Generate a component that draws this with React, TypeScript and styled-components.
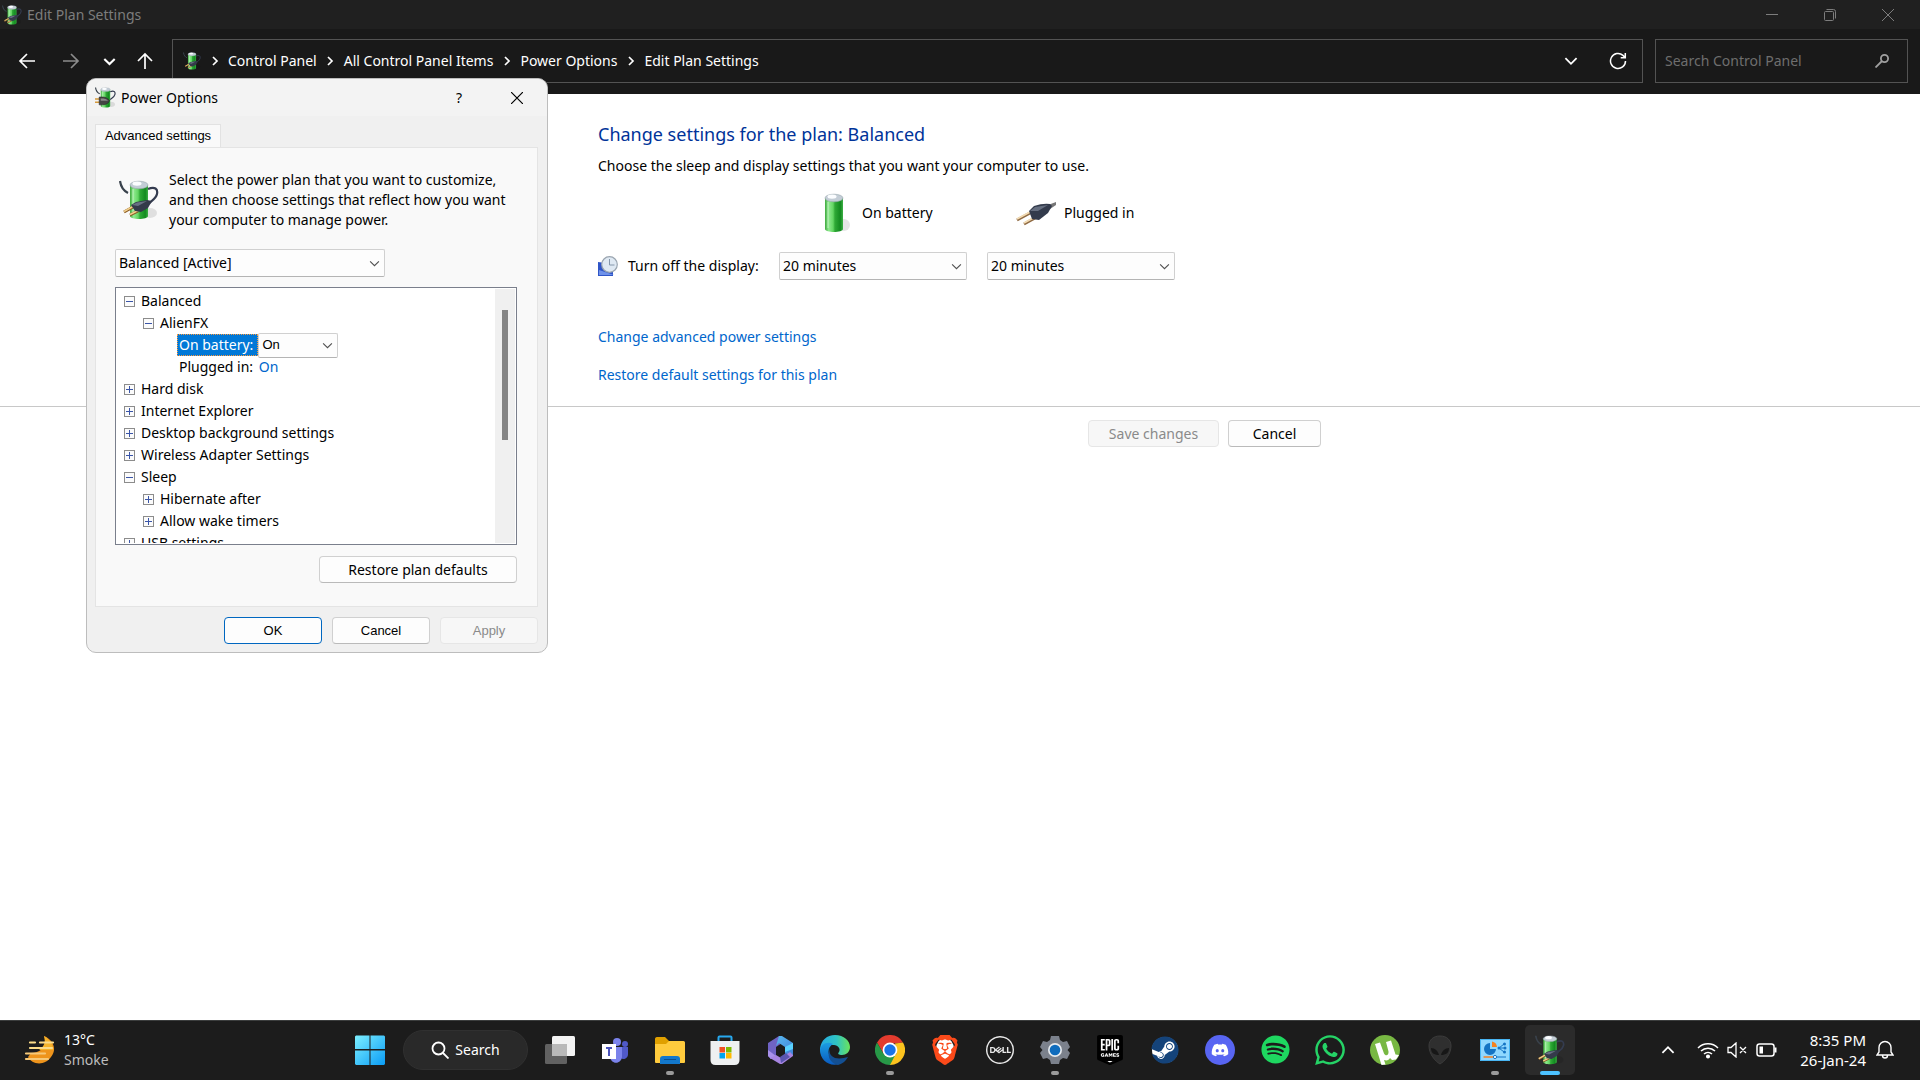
import React, { useState } from "react";
import styled, { createGlobalStyle } from "styled-components";
import { SiDell, SiBrave, SiEpicgames } from "react-icons/si";
import { FaSteam, FaSpotify, FaWhatsapp, FaDiscord } from "react-icons/fa";

const UI = `"Noto Sans", "Open Sans", sans-serif`;
const SHELL = `"Liberation Sans", Arial, sans-serif`;

const Global = createGlobalStyle`
  * { box-sizing: border-box; }
  body { margin: 0; background: #fff; color: #000; font: 14px/20px ${UI}; overflow: hidden; }
  button, input, select { font: inherit; color: inherit; }
  svg { display: block; flex: none; }
`;

/* ---------- window ---------- */

const Screen = styled.div`
  position: relative;
  display: flex;
  flex-direction: column;
  min-height: 100vh;
`;

const TitleBar = styled.header`
  display: flex;
  align-items: center;
  justify-content: space-between;
  height: 29px;
  background: #202020;
  color: #7d7d7d;
`;

const WindowTitle = styled.h1`
  display: flex;
  align-items: center;
  gap: 5px;
  margin: 0;
  padding-left: 2px;
  font-size: 14px;
  font-weight: 400;
`;

const WindowButtons = styled.div`
  display: flex;
  gap: 10px;
  padding-right: 8px;
`;

const BareButton = styled.button<{ $w?: number; $h?: number }>`
  display: flex;
  align-items: center;
  justify-content: center;
  width: ${(p) => p.$w ?? 48}px;
  height: ${(p) => p.$h ?? 29}px;
  padding: 0;
  border: 0;
  background: transparent;
  color: inherit;
`;

const NavBar = styled.nav`
  display: flex;
  align-items: center;
  height: 65px;
  padding: 0 12px 1px 5px;
  background: #191919;
  color: #fff;
`;

const NavButtons = styled.div`
  display: flex;
  width: 167px;
`;

const AddressBar = styled.div`
  display: flex;
  flex: 1;
  align-items: center;
  height: 44px;
  margin-right: 12px;
  padding-left: 10px;
  border: 1px solid #535353;
`;

const Crumbs = styled.ol`
  display: flex;
  flex: 1;
  align-items: center;
  margin: 0;
  padding: 0;
  list-style: none;
`;

const Crumb = styled.li`
  display: flex;
  align-items: center;
`;

const CrumbLink = styled.a`
  color: #fff;
  text-decoration: none;
`;

const SearchBox = styled.label`
  display: flex;
  align-items: center;
  width: 253px;
  height: 44px;
  padding: 0 18px 0 9px;
  border: 1px solid #535353;
  color: #a0a0a0;
`;

const SearchInput = styled.input`
  flex: 1;
  min-width: 0;
  padding: 0;
  border: 0;
  outline: 0;
  background: transparent;
  &::placeholder { color: #6e6e6e; opacity: 1; }
`;

/* ---------- plan page ---------- */

const Page = styled.main`
  flex: 1;
  background: #fff;
`;

const PlanSection = styled.section`
  padding: 26px 24px 21px 598px;
  border-bottom: 1px solid #c8c8c8;
`;

const PlanHeading = styled.h2`
  margin: 0 0 8px;
  font-size: 18px;
  line-height: 28px;
  font-weight: 400;
  color: #003399;
`;

const Lead = styled.p`
  margin: 0 0 17px;
`;

const SettingsGrid = styled.div`
  display: grid;
  grid-template-columns: 161px 188px 188px;
  column-gap: 20px;
  row-gap: 19px;
  margin-bottom: 47px;
`;

const ColumnHead = styled.div<{ $inset: number }>`
  display: flex;
  align-items: center;
  gap: 8px;
  padding-left: ${(p) => p.$inset}px;
`;

const RowLabel = styled.div`
  display: flex;
  align-items: center;
  gap: 10px;
  white-space: nowrap;
`;

const PlanLinks = styled.div`
  display: flex;
  flex-direction: column;
  align-items: flex-start;
  gap: 18px;
`;

const TextLink = styled.a`
  color: #0066cc;
  text-decoration: none;
`;

const PageActions = styled.div`
  display: flex;
  justify-content: flex-end;
  gap: 9px;
  max-width: 1321px;
  padding-top: 13px;
`;

const PushButton = styled.button<{ $w: number; $shell?: boolean; $primary?: boolean }>`
  width: ${(p) => p.$w}px;
  height: 27px;
  padding: 0;
  border: 1px solid ${(p) => (p.$primary ? "#0067c0" : "#d0d0d0")};
  border-bottom-color: ${(p) => (p.$primary ? "#0067c0" : "#bababa")};
  border-radius: 4px;
  background: #fdfdfd;
  font-family: ${(p) => (p.$shell ? SHELL : UI)};
  font-size: ${(p) => (p.$shell ? 13 : 14)}px;
  line-height: 20px;
  &:disabled { border-color: #e6e6e6; background: #f7f7f7; color: #8a8a8a; }
`;

const SelectFrame = styled.span<{ $w: number; $small?: boolean }>`
  display: grid;
  grid-template-columns: 1fr 20px;
  align-items: center;
  width: ${(p) => p.$w}px;
  height: ${(p) => (p.$small ? 25 : 28)}px;
  border: 1px solid #d0d0d0;
  border-bottom-color: #b4b4b4;
  border-radius: 2px;
  background: #fdfdfd;
  font-family: ${(p) => (p.$small ? SHELL : UI)};
  font-size: ${(p) => (p.$small ? 13 : 14)}px;
  svg { grid-area: 1 / 2; justify-self: center; pointer-events: none; color: #505050; }
`;

const NativeSelect = styled.select`
  grid-area: 1 / 1 / 2 / 3;
  width: 100%;
  height: 100%;
  padding: 0 20px 0 3px;
  border: 0;
  outline: 0;
  appearance: none;
  background: transparent;
`;

/* ---------- dialog ---------- */

const Dialog = styled.section`
  position: absolute;
  left: 86px;
  top: 78px;
  width: 462px;
  border: 1px solid #bdbdbd;
  border-radius: 10px;
  overflow: hidden;
  background: #f0f0f0;
`;

const DialogTitle = styled.header`
  display: flex;
  align-items: center;
  height: 37px;
  padding-left: 8px;
  background: #f3f3f3;
`;

const DialogName = styled.h2`
  flex: 1;
  margin: 0 0 0 5px;
  font-size: 14px;
  font-weight: 400;
`;

const DialogBody = styled.div`
  padding: 8px 9px 0 8px;
`;

const Tab = styled.button`
  display: block;
  width: 126px;
  height: 24px;
  margin-bottom: -1px;
  padding: 0 0 2px;
  border: 1px solid #e2e2e2;
  border-bottom: 0;
  background: #f9f9f9;
  font-family: ${SHELL};
  font-size: 13px;
`;

const TabPanel = styled.div`
  display: flex;
  flex-direction: column;
  align-items: flex-start;
  padding: 22px 20px 23px 19px;
  border: 1px solid #e4e4e4;
  background: #f9f9f9;
`;

const Intro = styled.div`
  display: flex;
  align-items: center;
  gap: 10px;
  margin-bottom: 19px;
  padding-left: 4px;
`;

const IntroText = styled.p`
  margin: 0;
  white-space: pre;
`;

const TreeFrame = styled.div`
  display: flex;
  align-self: stretch;
  height: 258px;
  margin: 10px 0 11px;
  padding: 1px;
  border: 1px solid #7a7f8c;
  background: #fff;
`;

const Tree = styled.ul`
  flex: 1;
  margin: 0;
  padding: 1px 0 0;
  list-style: none;
  overflow: hidden;
`;

const TreeRow = styled.li<{ $indent: number }>`
  display: flex;
  align-items: center;
  height: 22px;
  padding-left: ${(p) => p.$indent}px;
`;

const Toggle = styled.button`
  display: flex;
  width: 11px;
  height: 11px;
  margin-right: 4px;
  padding: 0;
  border: 1px solid #8c8c8c;
  background: #fbfbfb;
  color: #3a55a8;
`;

const NodeText = styled.span<{ $selected?: boolean }>`
  height: 22px;
  padding: 0 ${(p) => (p.$selected ? 4 : 1)}px 0 1px;
  border: 1px ${(p) => (p.$selected ? "dotted #ff9a3c" : "solid transparent")};
  background: ${(p) => (p.$selected ? "#0078d7" : "transparent")};
  color: ${(p) => (p.$selected ? "#fff" : "#000")};
  white-space: nowrap;
`;

const ScrollTrack = styled.div`
  display: flex;
  justify-content: center;
  width: 20px;
  padding-top: 21px;
  background: #f0f0f0;
`;

const ScrollThumb = styled.div`
  width: 6px;
  height: 130px;
  background: #858585;
`;

const RestoreRow = styled.div`
  align-self: flex-end;
`;

const DialogActions = styled.footer`
  display: flex;
  justify-content: flex-end;
  gap: 10px;
  padding: 10px 0 8px;
`;

/* ---------- taskbar ---------- */

const Taskbar = styled.footer`
  display: grid;
  grid-template-columns: 345px 1fr auto;
  align-items: center;
  height: 60px;
  padding-bottom: 2px;
  border-top: 1px solid #3b3d3d;
  background: #1c1c1c;
  color: #fff;
`;

const Weather = styled.div`
  display: flex;
  align-items: center;
  gap: 8px;
  padding-left: 24px;
`;

const Muted = styled.div`
  color: #bdbdbd;
`;

const Apps = styled.div`
  display: flex;
  align-items: center;
  gap: 5px;
`;

const AppButton = styled.button<{ $active?: boolean }>`
  display: grid;
  grid-template-rows: 46px 4px;
  justify-items: center;
  align-items: center;
  width: 50px;
  height: 50px;
  padding: 0;
  border: 0;
  border-radius: 5px;
  background: ${(p) => (p.$active ? "#2b2b2b" : "transparent")};
  color: #fff;
  > svg { margin-top: 4px; }
`;

const Running = styled.span<{ $active?: boolean }>`
  width: ${(p) => (p.$active ? 20 : 8)}px;
  height: 4px;
  border-radius: 2px;
  background: ${(p) => (p.$active ? "#4cc2ff" : "#9a9a9a")};
`;

const SearchPill = styled.button`
  display: flex;
  align-items: center;
  justify-content: center;
  gap: 6px;
  width: 125px;
  height: 40px;
  margin: 0 2px 0 3px;
  padding: 0;
  border: 1px solid #303030;
  border-radius: 20px;
  background: #292929;
`;

const Tray = styled.div`
  display: flex;
  align-items: center;
  padding-right: 25px;
`;

const TrayGroup = styled.div`
  display: flex;
  align-items: center;
  gap: 8px;
  margin: 0 23px 0 22px;
`;

const Clock = styled.div`
  margin-right: 9px;
  font-size: 15px;
  text-align: right;
`;

/* ---------- drawings ---------- */

const Chevron = ({ size = 10, turn = 0, width = 1.4 }: { size?: number; turn?: number; width?: number }) => (
  <svg width={size} height={size} viewBox="0 0 10 10" fill="none" stroke="currentColor" strokeWidth={width}>
    <path d="M1 3l4 4 4-4" transform={`rotate(${turn} 5 5)`} />
  </svg>
);

const Arrow = ({ turn = 0, dim }: { turn?: number; dim?: boolean }) => (
  <svg width="18" height="18" viewBox="0 0 18 18" fill="none" stroke={dim ? "#8c8c8c" : "#fff"} strokeWidth="1.7">
    <path d="M17 9H2M9 2L2 9l7 7" transform={`rotate(${turn} 9 9)`} />
  </svg>
);

const Greens = ({ id }: { id: string }) => (
  <defs>
    <linearGradient id={id}>
      <stop offset="0" stopColor="#3fa83f" />
      <stop offset=".2" stopColor="#8eea8e" />
      <stop offset=".45" stopColor="#63d563" />
      <stop offset=".55" stopColor="#2fa936" />
      <stop offset=".85" stopColor="#138a20" />
      <stop offset="1" stopColor="#3db045" />
    </linearGradient>
  </defs>
);

const Cell = ({ id }: { id: string }) => (
  <>
    <path d="M11 5v31c0 4 18 4 18 0V5z" fill={`url(#${id})`} />
    <ellipse cx="20" cy="5" rx="9" ry="3.800" fill="#c3cdd6" stroke="#9aa7ae" strokeWidth=".6" />
    <ellipse cx="18" cy="3.600" rx="4.500" ry="2.200" fill="#fbfdff" />
    <path d="M14 9v26" stroke="#d3fad3" strokeOpacity=".5" strokeWidth="1.500" />
  </>
);

const PowerIcon = ({ id, size = 40, left }: { id: string; size?: number; left?: boolean }) => (
  <svg width={size} height={size} viewBox="0 0 40 40">
    <Greens id={id} />
    <ellipse cx="31" cy="33" rx="7" ry="5" fill="#000" opacity=".1" />
    <path d="M1 1c1 7 4 10 8 12" fill="none" stroke="#39424c" strokeWidth="2.200" />
    <Cell id={id} />
    <path d="M29 9c7-3 10 0 9 5s-6 7-9 10" fill="none" stroke="#343c50" strokeWidth="2.200" />
    {left ? (
      <g>
        <path d="M0 23h9M0 29h9" stroke="#d59a3d" strokeWidth="3" />
        <path d="M8 19h6c7 0 10 3 14 7-3 6-8 8-14 8H8z" fill="#454545" stroke="#222" />
        <path d="M11 22h5q6 1 9 4H11z" fill="#8a8a8a" />
      </g>
    ) : (
      <g>
        <path d="M5 32l9-5M11 35l8-4" stroke="#8a5a22" strokeWidth="3" />
        <path d="M5 31.500l9-5M11 34.500l8-4" stroke="#f0cf8c" strokeWidth="1.600" />
        <path d="M12 25l5-3 11-2 5 1-4 7-7 4-6-1z" fill="#343a4a" />
        <path d="M13 25l5-2.500 10-1.500-9 5z" fill="#687083" />
      </g>
    )}
  </svg>
);

const BatteryIcon = () => (
  <svg width="40" height="40" viewBox="0 0 40 40">
    <Greens id="cell-large" />
    <ellipse cx="30" cy="32" rx="6" ry="6" fill="#000" opacity=".1" />
    <Cell id="cell-large" />
  </svg>
);

const PlugIcon = () => (
  <svg width="40" height="40" viewBox="0 0 40 40">
    <path d="M1 27l13-7M8 31l11-6" stroke="#8f6a43" strokeWidth="3" />
    <path d="M1 26l13-7M8 30l11-6" stroke="#f3dcb4" strokeWidth="1.800" />
    <path d="M32 12l8-3v3l-6 4z" fill="#777" />
    <path d="M13 18l5-5q9-3 16-2l2 2-4 7-9 7-7-1z" fill="#333b4c" />
    <path d="M14 18l5-4 13-2-10 6z" fill="#666f80" />
  </svg>
);

const DisplayClock = () => (
  <svg width="20" height="20" viewBox="0 0 20 20">
    <path d="M0 6l15 2v12H0z" fill="#2f55c7" />
    <path d="M1 14l15 5H1z" fill="#6f92ea" />
    <circle cx="11.500" cy="8.500" r="7.800" fill="#dfe9f3" stroke="#9aa5b0" strokeWidth="1.200" />
    <path d="M11.500 3v6h5" fill="none" stroke="#8496aa" />
  </svg>
);

const AppIcons: Record<string, React.ReactNode> = {
  Start: (
    <svg width="30" height="30" viewBox="0 0 30 30">
      <defs>
        <linearGradient id="win" x1="0" y1="0" x2="1" y2="1" gradientUnits="objectBoundingBox">
          <stop offset="0" stopColor="#7defff" /><stop offset="1" stopColor="#0a9cf5" />
        </linearGradient>
      </defs>
      <path fill="url(#win)" d="M1 .5h13.500V14H0V1.500zM15.500 .5H29l1 1V14H15.500zM0 15.500h14.500V30H1l-1-1zM15.500 15.500H30V29l-1 1H15.500z" />
    </svg>
  ),
  "Task view": (
    <svg width="30" height="30" viewBox="0 0 30 30">
      <rect x="0" y="9" width="22" height="20" rx="1.500" fill="#616161" />
      <rect x="7" y="1" width="23" height="20" rx="1.500" fill="#f3f3f3" />
      <path d="M7 9h15v12H7z" fill="#b9b9b9" />
    </svg>
  ),
  Teams: (
    <svg width="28" height="28" viewBox="0 0 28 28">
      <circle cx="24" cy="8" r="3" fill="#5059c9" />
      <path d="M18 11h9v7c0 6-8 7-9 1z" fill="#5059c9" />
      <circle cx="16" cy="6" r="4" fill="#7b83eb" />
      <path d="M9 11h12v9c0 9-12 9-12 0z" fill="#7b83eb" />
      <rect x="1" y="8" width="14" height="15" fill="#fff" />
      <path d="M5 12h6M8 12v8" stroke="#4b53bc" strokeWidth="2" />
    </svg>
  ),
  "File Explorer": (
    <svg width="30" height="30" viewBox="0 0 30 30">
      <path d="M0 4c0-1 .5-2 2-2h8l4 4v5H0z" fill="#e0a000" />
      <path d="M0 9h11l3-3h14.500q1.500 0 1.500 1.500V27q0 1-1 1H1q-1 0-1-1z" fill="#ffcb3d" />
      <path d="M5 29v-5q0-3 3-3h14q3 0 3 3v5z" fill="#1378cc" />
      <path d="M9 24.500h12" stroke="#0b4f8e" />
    </svg>
  ),
  "Microsoft Store": (
    <svg width="30" height="30" viewBox="0 0 30 30">
      <path d="M8.500 7V2.500q0-1 1-1h11q1 0 1 1V7" fill="none" stroke="#27a8ee" strokeWidth="2" />
      <path d="M.5 6h29v19q0 5-5 5h-19q-5 0-5-5z" fill="#eef0f1" />
      <path d="M9.500 12H15v5.500H9.500z" fill="#f25022" /><path d="M16 12h5.500v5.500H16z" fill="#7fba00" />
      <path d="M9.500 18H15v5.500H9.500z" fill="#00a4ef" /><path d="M16 18h5.500v5.500H16z" fill="#ffb900" />
    </svg>
  ),
  "Microsoft 365": (
    <svg width="30" height="30" viewBox="0 0 30 30">
      <defs>
        <linearGradient id="m365" x1="0" y1="0" x2="1" y2="1"><stop offset="0" stopColor="#58b8ee" /><stop offset="1" stopColor="#3f7fd8" /></linearGradient>
      </defs>
      <path d="M3 8L14 1l3 7-6 4v9l-5 3-3-3z" fill="#6f63c4" />
      <path d="M3 15l8 6-5 3-3-3z" fill="#a991ea" />
      <path d="M14 1h3l11 7v12l-3 2-5-3v-7l-6-4-3 3z" fill="url(#m365)" />
      <path d="M28 8v6l-8 3v-5z" fill="#59d2ff" />
      <path d="M5 23l6-3 5 3 9-6 3 3v1l-11 8h-2z" fill="#a684e0" />
      <path d="M15 22l6-4 4 4-9 6z" fill="#5a55b0" />
      <path d="M15.500 11l3.500 2v4.500l-3.500 2-3.500-2V13z" fill="#1c1c1c" />
    </svg>
  ),
  Edge: (
    <svg width="30" height="30" viewBox="0 0 30 30">
      <defs>
        <linearGradient id="edgeTop" x1="0" x2="1"><stop offset="0" stopColor="#25a9e6" /><stop offset=".55" stopColor="#2fc4c4" /><stop offset="1" stopColor="#6be35b" /></linearGradient>
        <linearGradient id="edgeSide" x1="0" y1="0" x2="0" y2="1"><stop offset="0" stopColor="#1b9de2" /><stop offset="1" stopColor="#0a5bc0" /></linearGradient>
      </defs>
      <path d="M0 14C1 5 7 0 15 0c9 0 15 6 15 12 0 5-4 8-8 8-3 0-5-1-3-3 2-3-1-7-5-7-7 0-13 2-14 8z" fill="url(#edgeTop)" />
      <path d="M0 15c1-6 7-9 13-6-5 3-6 9-2 14 2 3 5 5 8 6C9 32 0 25 0 15z" fill="url(#edgeSide)" />
      <path d="M11 12c-3 4-1 9 4 11 5 1 9 0 13-1-3 5-6 7-10 8C9 28 6 19 11 12z" fill="#134f92" />
    </svg>
  ),
  Chrome: (
    <svg width="30" height="30" viewBox="0 0 30 30">
      <path d="M2 7.500A15 15 0 0 1 28 7.500L15 9l-6.500 9.750z" fill="#e33b2e" />
      <path d="M28 7.500A15 15 0 0 1 15 30l-1-5 7.500-6.250L20 8.500l8-1z" fill="#fcc31e" />
      <path d="M15 30A15 15 0 0 1 2 7.500L8.500 18.750 20.500 19.500z" fill="#279847" />
      <circle cx="15" cy="15" r="7.400" fill="#fff" />
      <circle cx="15" cy="15" r="5.700" fill="#1a73e8" />
    </svg>
  ),
  Brave: (
    <svg width="30" height="30" viewBox="0 0 30 30">
      <ellipse cx="15" cy="14" rx="9" ry="11" fill="#fff" />
      <SiBrave size={30} color="#fb4a1a" />
    </svg>
  ),
  Dell: <SiDell size={28} color="#e8e8e8" />,
  Settings: (
    <svg width="30" height="30" viewBox="0 0 30 30">
      <path d="M11 1h8l1 4 3 2 4-1 3 6-2.500 3L30 18l-3 6-4-1-3 2-1 4h-8l-1-4-3-2-4 1-3-6 2.500-3L0 12l3-6 4 1 3-2z" fill="#7b818c" />
      <circle cx="15" cy="15" r="7" fill="#e6eaee" />
      <circle cx="15" cy="15" r="5.300" fill="#0f6cbd" />
    </svg>
  ),
  "Epic Games": (
    <svg width="30" height="30" viewBox="0 0 30 30">
      <rect x="4" y="2" width="22" height="22" fill="#fff" />
      <path d="M10 24h10l-5 4z" fill="#fff" />
      <SiEpicgames size={30} color="#000" />
    </svg>
  ),
  Steam: (
    <svg width="30" height="30" viewBox="0 0 30 30">
      <circle cx="15" cy="15" r="13" fill="#fff" />
      <FaSteam x="1" y="1" size={28} color="#14437a" />
    </svg>
  ),
  Discord: (
    <svg width="30" height="30" viewBox="0 0 30 30">
      <circle cx="15" cy="15" r="15" fill="#5865f2" />
      <FaDiscord x="6" y="6" size={18} color="#fff" />
    </svg>
  ),
  Spotify: <FaSpotify size={29} color="#1ed760" />,
  WhatsApp: <FaWhatsapp size={34} color="#25d366" />,
  uTorrent: (
    <svg width="30" height="30" viewBox="0 0 30 30">
      <circle cx="15" cy="15" r="15" fill="#78b843" />
      <path d="M5 9l5-1.500 4 11c1.500 3 5 2 4.500-2L16 7l5-1.500 4.500 14L29 20l-3 4.500-4 .5-2-2c-1 2-3 3-6 2l1.500 4.500-4 .5z" fill="#fff" />
    </svg>
  ),
  Alienware: (
    <svg width="30" height="30" viewBox="0 0 30 30">
      <path d="M15 1C8 1 4 5 4 11c0 8 6 15 11 18 5-3 11-10 11-18C26 5 22 1 15 1z" fill="#2f2f2f" stroke="#3c3c3c" />
      <path d="M6 13c4 0 7 3 8 7-5 0-8-2-8-7zM24 13c-4 0-7 3-8 7 5 0 8-2 8-7z" fill="#171717" />
    </svg>
  ),
  "Control Panel": (
    <svg width="30" height="30" viewBox="0 0 30 30">
      <rect x=".5" y="4.500" width="29" height="21" fill="#8fd8ff" stroke="#48b5f2" />
      <path d="M10 8v6h6a6 6 0 1 1-6-6z" fill="#1474c4" />
      <path d="M12 6.500a6 6 0 0 1 5 5.500h-5z" fill="#f58220" />
      <path d="M19 13l5-4M19 13h6M19 13l5 4" stroke="#1474c4" strokeWidth="1" />
      <circle cx="19" cy="13" r="1.500" fill="#1474c4" />
      <circle cx="24.500" cy="9" r="1.500" fill="#1474c4" /><circle cx="25" cy="13" r="1.500" fill="#1474c4" /><circle cx="24.500" cy="17" r="1.500" fill="#1474c4" />
      <path d="M3.500 22h10" stroke="#f58220" strokeWidth="1.500" /><path d="M16 22h10" stroke="#1474c4" />
      <circle cx="15" cy="22" r="1.600" fill="#fff" stroke="#1474c4" />
    </svg>
  ),
  "Power Options": <PowerIcon id="pw-task" size={30} />,
};

/* ---------- pieces ---------- */

const Select = ({ id, label, w, small, options }: { id: string; label: string; w: number; small?: boolean; options: string[] }) => (
  <SelectFrame $w={w} $small={small}>
    <NativeSelect id={id} aria-label={label}>
      {options.map((o) => <option key={o}>{o}</option>)}
    </NativeSelect>
    <Chevron size={11} width={1} />
  </SelectFrame>
);

type Node = { text: string; child?: boolean; open?: boolean };

const nodes: Node[] = [
  { text: "Hard disk" },
  { text: "Internet Explorer" },
  { text: "Desktop background settings" },
  { text: "Wireless Adapter Settings" },
  { text: "Sleep", open: true },
  { text: "Hibernate after", child: true },
  { text: "Allow wake timers", child: true },
  { text: "USB settings" },
];

const TreeNode = ({ text, child, open }: Node) => (
  <TreeRow $indent={child ? 26 : 7}>
    <Toggle aria-label={`${open ? "Collapse" : "Expand"} ${text}`} aria-expanded={!!open}>
      <svg width="9" height="9" viewBox="0 0 9 9" stroke="currentColor">
        <path d={open ? "M1 4.500h7" : "M1 4.500h7M4.500 1v7"} />
      </svg>
    </Toggle>
    <NodeText>{text}</NodeText>
  </TreeRow>
);

const crumbs = ["Control Panel", "All Control Panel Items", "Power Options", "Edit Plan Settings"];
const running = ["File Explorer", "Chrome", "Settings", "Control Panel"];

const TaskApp = ({ name }: { name: string }) => {
  const active = name === "Power Options";
  return (
    <AppButton aria-label={name} $active={active}>
      {AppIcons[name]}
      {(active || running.includes(name)) && <Running $active={active} />}
    </AppButton>
  );
};

export default function App() {
  const [query, setQuery] = useState("");
  return (
    <Screen>
      <Global />
      <TitleBar>
        <WindowTitle><PowerIcon id="pw-title" size={20} />Edit Plan Settings</WindowTitle>
        <WindowButtons>
          <BareButton aria-label="Minimize">
            <svg width="12" height="12" viewBox="0 0 12 12" stroke="currentColor"><path d="M0 5.500h12" /></svg>
          </BareButton>
          <BareButton aria-label="Restore">
            <svg width="12" height="12" viewBox="0 0 12 12" fill="none" stroke="currentColor">
              <rect x=".5" y="2.500" width="9" height="9" rx="1" /><path d="M2.500 .5h7q2 0 2 2v7" />
            </svg>
          </BareButton>
          <BareButton aria-label="Close">
            <svg width="12" height="12" viewBox="0 0 12 12" stroke="currentColor"><path d="M0 0l12 12M12 0L0 12" /></svg>
          </BareButton>
        </WindowButtons>
      </TitleBar>

      <NavBar>
        <NavButtons>
          <BareButton $w={44} aria-label="Back"><Arrow /></BareButton>
          <BareButton $w={44} aria-label="Forward"><Arrow turn={180} dim /></BareButton>
          <BareButton $w={32} aria-label="Recent locations"><Chevron size={13} width={1.6} /></BareButton>
          <BareButton $w={40} aria-label="Up"><Arrow turn={90} /></BareButton>
        </NavButtons>
        <AddressBar>
          <PowerIcon id="pw-address" size={18} />
          <Crumbs>
            {crumbs.map((c) => (
              <Crumb key={c}>
                <BareButton $w={27} $h={20} aria-label={`Browse ${c}`}><Chevron turn={-90} width={1.7} /></BareButton>
                <CrumbLink href="#">{c}</CrumbLink>
              </Crumb>
            ))}
          </Crumbs>
          <BareButton $w={46} aria-label="Previous locations"><Chevron size={14} width={1.3} /></BareButton>
          <BareButton aria-label="Refresh">
            <svg width="18" height="18" viewBox="0 0 18 18" fill="none" stroke="currentColor" strokeWidth="1.500">
              <path d="M16.500 9a7.500 7.500 0 1 1-2.500-5.600L16 5.500M16.300 1v4.700h-4.600" />
            </svg>
          </BareButton>
        </AddressBar>
        <SearchBox>
          <SearchInput aria-label="Search Control Panel" placeholder="Search Control Panel" value={query} onChange={(e) => setQuery(e.target.value)} />
          <svg width="14" height="14" viewBox="0 0 14 14" fill="none" stroke="currentColor" strokeWidth="1.800">
            <circle cx="9.500" cy="4.500" r="3.600" /><path d="M7 7l-6.500 6.500" />
          </svg>
        </SearchBox>
      </NavBar>

      <Page>
        <PlanSection>
          <PlanHeading>Change settings for the plan: Balanced</PlanHeading>
          <Lead>Choose the sleep and display settings that you want your computer to use.</Lead>
          <SettingsGrid>
            <span />
            <ColumnHead $inset={35}><BatteryIcon />On battery</ColumnHead>
            <ColumnHead $inset={29}><PlugIcon />Plugged in</ColumnHead>
            <RowLabel><DisplayClock /><label htmlFor="display-battery">Turn off the display:</label></RowLabel>
            <Select id="display-battery" label="Turn off the display on battery" w={188} options={["20 minutes", "30 minutes", "Never"]} />
            <Select id="display-plugged" label="Turn off the display plugged in" w={188} options={["20 minutes", "30 minutes", "Never"]} />
          </SettingsGrid>
          <PlanLinks>
            <TextLink href="#">Change advanced power settings</TextLink>
            <TextLink href="#">Restore default settings for this plan</TextLink>
          </PlanLinks>
        </PlanSection>
        <PageActions>
          <PushButton $w={131} disabled>Save changes</PushButton>
          <PushButton $w={93}>Cancel</PushButton>
        </PageActions>
      </Page>

      <Dialog role="dialog" aria-label="Power Options">
        <DialogTitle>
          <PowerIcon id="pw-dialog" size={21} left />
          <DialogName>Power Options</DialogName>
          <BareButton $w={56} $h={36} aria-label="Help">?</BareButton>
          <BareButton $w={60} $h={36} aria-label="Close">
            <svg width="12" height="12" viewBox="0 0 12 12" stroke="currentColor" strokeWidth="1.200"><path d="M0 0l12 12M12 0L0 12" /></svg>
          </BareButton>
        </DialogTitle>
        <DialogBody>
          <Tab role="tab" aria-selected="true">Advanced settings</Tab>
          <TabPanel role="tabpanel">
            <Intro>
              <PowerIcon id="pw-intro" size={40} />
              <IntroText>{"Select the power plan that you want to customize,\nand then choose settings that reflect how you want\nyour computer to manage power."}</IntroText>
            </Intro>
            <Select id="plan" label="Power plan" w={270} options={["Balanced [Active]"]} />
            <TreeFrame>
              <Tree>
                <TreeNode text="Balanced" open />
                <TreeNode text="AlienFX" child open />
                <TreeRow $indent={60}>
                  <NodeText $selected>On battery:</NodeText>
                  <Select id="fx-battery" label="AlienFX on battery" w={80} small options={["On", "Off"]} />
                </TreeRow>
                <TreeRow $indent={60}>
                  <NodeText>Plugged in:&nbsp;</NodeText>
                  <TextLink href="#">On</TextLink>
                </TreeRow>
                {nodes.map((n) => <TreeNode key={n.text} {...n} />)}
              </Tree>
              <ScrollTrack><ScrollThumb /></ScrollTrack>
            </TreeFrame>
            <RestoreRow><PushButton $w={198}>Restore plan defaults</PushButton></RestoreRow>
          </TabPanel>
          <DialogActions>
            <PushButton $w={98} $shell $primary>OK</PushButton>
            <PushButton $w={98} $shell>Cancel</PushButton>
            <PushButton $w={98} $shell disabled>Apply</PushButton>
          </DialogActions>
        </DialogBody>
      </Dialog>

      <Taskbar>
        <Weather>
          <svg width="32" height="30" viewBox="0 0 32 30">
            <path d="M20 1c10 4 13 14 7 21-6 9-19 8-23 0l3-4c9 0 17-6 13-17z" fill="#ee941c" />
            <path d="M20 1c6 4 9 9 9 14H15c5-3 7-8 5-14z" fill="#f5b32a" />
            <path d="M6 7.500h5M16 7.500h13M6 13h22" stroke="#fbdc8a" strokeWidth="2.200" strokeLinecap="round" />
            <path d="M2 18.500h19M2 24h22" stroke="#f6c878" strokeWidth="2.200" strokeLinecap="round" />
          </svg>
          <div>13°C<Muted>Smoke</Muted></div>
        </Weather>
        <Apps>
          <TaskApp name="Start" />
          <SearchPill>
            <svg width="18" height="18" viewBox="0 0 18 18" fill="none" stroke="currentColor" strokeWidth="1.800">
              <circle cx="7.500" cy="7.500" r="6" /><path d="M12 12l5.500 5.500" />
            </svg>
            Search
          </SearchPill>
          {Object.keys(AppIcons).filter((n) => n !== "Start").map((n) => <TaskApp key={n} name={n} />)}
        </Apps>
        <Tray>
          <BareButton $w={14} aria-label="Show hidden icons"><Chevron size={14} turn={180} width={1.3} /></BareButton>
          <TrayGroup>
            <svg width="22" height="18" viewBox="0 0 22 18" fill="none" stroke="currentColor" strokeWidth="1.500">
              <path d="M1 7a14 14 0 0 1 20 0M4 10a10 10 0 0 1 14 0M7 13a6 6 0 0 1 8 0" /><circle cx="11" cy="15.500" r="1.300" fill="currentColor" />
            </svg>
            <svg width="21" height="16" viewBox="0 0 21 16" fill="none" stroke="currentColor" strokeWidth="1.300">
              <path d="M1 5.500h3L9 1v14l-5-4.500H1zM13 5l6 6M19 5l-6 6" />
            </svg>
            <svg width="21" height="16" viewBox="0 0 21 16" fill="none" stroke="currentColor" strokeWidth="1.500">
              <rect x="1" y="2" width="17" height="12" rx="2.500" /><path d="M19.500 5.500v5" strokeWidth="2" /><path d="M3.500 4.500h3.500v7H3.500z" fill="currentColor" stroke="none" />
            </svg>
          </TrayGroup>
          <Clock>8:35 PM<br />26-Jan-24</Clock>
          <BareButton $w={20} aria-label="Notifications">
            <svg width="18" height="19" viewBox="0 0 18 19" fill="none" stroke="currentColor" strokeWidth="1.400">
              <path d="M3 12V7.500a6 6 0 0 1 12 0V12l2 3H1zM6.500 15.500a2.500 2.500 0 0 0 5 0" />
            </svg>
          </BareButton>
        </Tray>
      </Taskbar>
    </Screen>
  );
}
